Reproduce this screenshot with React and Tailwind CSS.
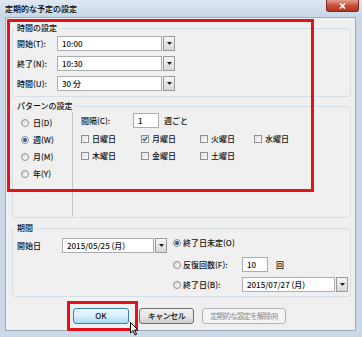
import React from "react";

const Arrow = () => (
  <svg width="5" height="3" viewBox="0 0 5 3">
    <path d="M0 0H5L2.5 3Z" fill="#1e1e1e" />
  </svg>
);

const Combo = ({ width, value }) => (
  <div className="flex h-[15px] items-stretch gap-[1px]">
    <div className={`${width} flex items-center whitespace-nowrap border border-[#abadb3] bg-white pl-[4px]`}>{value}</div>
    <div className="flex w-[12px] items-center justify-center border border-[#9a9a9a] bg-gradient-to-b from-[#f6f6f6] to-[#d8d8d8]">
      <Arrow />
    </div>
  </div>
);

const Radio = ({ checked }) => (
  <span className="flex h-[8px] w-[8px] shrink-0 items-center justify-center rounded-full border border-[#8e8f8f] bg-gradient-to-br from-[#d6d6d6] to-white">
    {checked && <span className="h-[4px] w-[4px] rounded-full bg-[#1f5aa0]" />}
  </span>
);

const Check = ({ checked }) => (
  <span className="flex h-[8px] w-[8px] shrink-0 items-center justify-center border border-[#8e8f8f] bg-gradient-to-br from-[#dcdcdc] to-white">
    {checked && (
      <svg width="6" height="6" viewBox="0 0 6 6">
        <path d="M1 3L2.4 4.6L5.2 0.8" stroke="#1c4f8c" strokeWidth="1.2" fill="none" />
      </svg>
    )}
  </span>
);

const DayBox = ({ width, label, checked }) => (
  <div className={`${width} flex items-center gap-[3px]`}>
    <Check checked={checked} />
    <span>{label}</span>
  </div>
);

const App = () => {
  return (
    <div className="relative h-[337px] w-[362px] overflow-hidden whitespace-nowrap bg-[#cad8e8] font-['Noto_Sans_CJK_JP','Liberation_Sans',sans-serif] text-[8px] font-medium leading-none text-[#111]">
      {/* title bar */}
      <div className="flex h-[17px] items-center justify-between bg-gradient-to-b from-[#dfe8f2] to-[#c8d7e8] pl-[5px] pr-[3px]">
        <span className="text-black">定期的な予定の設定</span>
        <div className="flex h-[12px] w-[33px] items-center justify-center self-start rounded-b-[3px] border border-t-0 border-[#7d2b22] bg-gradient-to-b from-[#e6a08f] via-[#c8503c] to-[#b5361f]">
          <svg width="7" height="6" viewBox="0 0 7 6">
            <path d="M1 0.5L6 5.5M6 0.5L1 5.5" stroke="white" strokeWidth="1.6" />
          </svg>
        </div>
      </div>

      {/* client area */}
      <div className="ml-[5px] mr-[6px] h-[314px] border border-[#9aabbf] bg-[#f0f0f0]">
        {/* 時間の設定 */}
        <fieldset className="ml-[6px] mt-[4px] w-[339px] rounded-[3px] border border-[#d5dfe5] pb-[5px]">
          <legend className="ml-[2px] px-[2px] leading-[12px]">時間の設定</legend>
          <div className="flex flex-col gap-[5px] pl-[4px] pt-[2px]">
            <div className="flex h-[15px] items-center">
              <span className="w-[40px]">開始(T):</span>
              <Combo width="w-[105px]" value="10:00" />
            </div>
            <div className="flex h-[15px] items-center">
              <span className="w-[40px]">終了(N):</span>
              <Combo width="w-[105px]" value="10:30" />
            </div>
            <div className="flex h-[15px] items-center">
              <span className="w-[40px]">時間(U):</span>
              <Combo width="w-[105px]" value="30 分" />
            </div>
          </div>
        </fieldset>

        {/* パターンの設定 */}
        <fieldset className="ml-[6px] mt-[3px] w-[339px] rounded-[3px] border border-[#d5dfe5]">
          <legend className="ml-[2px] px-[2px] leading-[12px]">パターンの設定</legend>
          <div className="flex h-[105px]">
            <div className="flex w-[59px] flex-col pl-[8px] pt-[2px]">
              {[
                ["日(D)", false],
                ["週(W)", true],
                ["月(M)", false],
                ["年(Y)", false],
              ].map(([label, on]) => (
                <div key={label} className="flex h-[17px] items-center gap-[4px]">
                  <Radio checked={on} />
                  <span>{label}</span>
                </div>
              ))}
            </div>
            <div className="flex-1 border-l border-[#c9c9c9] pl-[8px] pt-[1px]">
              <div className="flex h-[15px] items-center">
                <span className="w-[52px]">間隔(C):</span>
                <div className="flex h-[15px] w-[26px] items-center border border-[#abadb3] bg-white pl-[4px]">1</div>
                <span className="ml-[5px]">週ごと</span>
              </div>
              <div className="mt-[3px] flex flex-col gap-[1px]">
                <div className="flex h-[16px] items-center">
                  <DayBox width="w-[60px]" label="日曜日" />
                  <DayBox width="w-[59px]" label="月曜日" checked />
                  <DayBox width="w-[54px]" label="火曜日" />
                  <DayBox width="w-auto" label="水曜日" />
                </div>
                <div className="flex h-[16px] items-center">
                  <DayBox width="w-[60px]" label="木曜日" />
                  <DayBox width="w-[59px]" label="金曜日" />
                  <DayBox width="w-[54px]" label="土曜日" />
                </div>
              </div>
            </div>
          </div>
        </fieldset>

        {/* 期間 */}
        <fieldset className="ml-[6px] mt-[4px] w-[339px] rounded-[3px] border border-[#d5dfe5]">
          <legend className="ml-[2px] px-[2px] leading-[12px]">期間</legend>
          <div className="flex h-[62px]">
            <div className="w-[160px] pl-[4px] pt-[4px]">
              <div className="flex h-[15px] items-center">
                <span className="w-[45px]">開始日</span>
                <Combo width="w-[92px]" value="2015/05/25 (月)" />
              </div>
            </div>
            <div className="flex flex-col">
              <div className="mt-[1px] flex h-[16px] items-center gap-[2px]">
                <Radio checked />
                <span>終了日未定(O)</span>
              </div>
              <div className="mt-[6px] flex h-[15px] items-center gap-[2px]">
                <Radio />
                <span className="w-[57px]">反復回数(F):</span>
                <div className="flex h-[15px] w-[26px] items-center border border-[#abadb3] bg-white pl-[4px]">10</div>
                <span className="ml-[6px]">回</span>
              </div>
              <div className="mt-[5px] flex h-[15px] items-center gap-[2px]">
                <Radio />
                <span className="w-[57px]">終了日(B):</span>
                <Combo width="w-[93px]" value="2015/07/27 (月)" />
              </div>
            </div>
          </div>
        </fieldset>

        {/* buttons */}
        <div className="ml-[67px] mt-[11px] flex items-center">
          <button className="flex h-[16px] w-[56px] items-center justify-center rounded-[3px] border border-[#3c7fb1] bg-gradient-to-b from-[#eaf6fd] via-[#d9f0fc] to-[#a7d9f5] text-[#111]">
            OK
          </button>
          <button className="ml-[10px] flex h-[16px] w-[55px] items-center justify-center rounded-[3px] border border-[#707070] bg-gradient-to-b from-[#f2f2f2] via-[#e6e6e6] to-[#cfcfcf] tracking-[-0.5px] text-[#111]">
            キャンセル
          </button>
          <button className="ml-[8px] flex h-[16px] w-[84px] items-center justify-center overflow-hidden rounded-[3px] border border-[#adb2b5] bg-[#f4f4f4] text-[7.5px] font-normal tracking-[-0.8px] text-[#8a8a8a]">
            定期的な設定を解除(R)
          </button>
        </div>
      </div>

      {/* annotation frames */}
      <div className="absolute left-[7px] top-[19px] h-[173px] w-[307px] border-[3px] border-[#e3131b]" />
      <div className="absolute left-[67px] top-[301px] h-[30px] w-[71px] border-[3px] border-[#e3131b]" />

      {/* mouse pointer */}
      <svg className="absolute left-[130px] top-[322px]" width="9" height="14" viewBox="0 0 9 14">
        <path d="M0.5 0.5V11L3 8.6L5 13L6.6 12.3L4.6 8H8Z" fill="white" stroke="black" strokeWidth="1" />
      </svg>
    </div>
  );
};

export default App;
